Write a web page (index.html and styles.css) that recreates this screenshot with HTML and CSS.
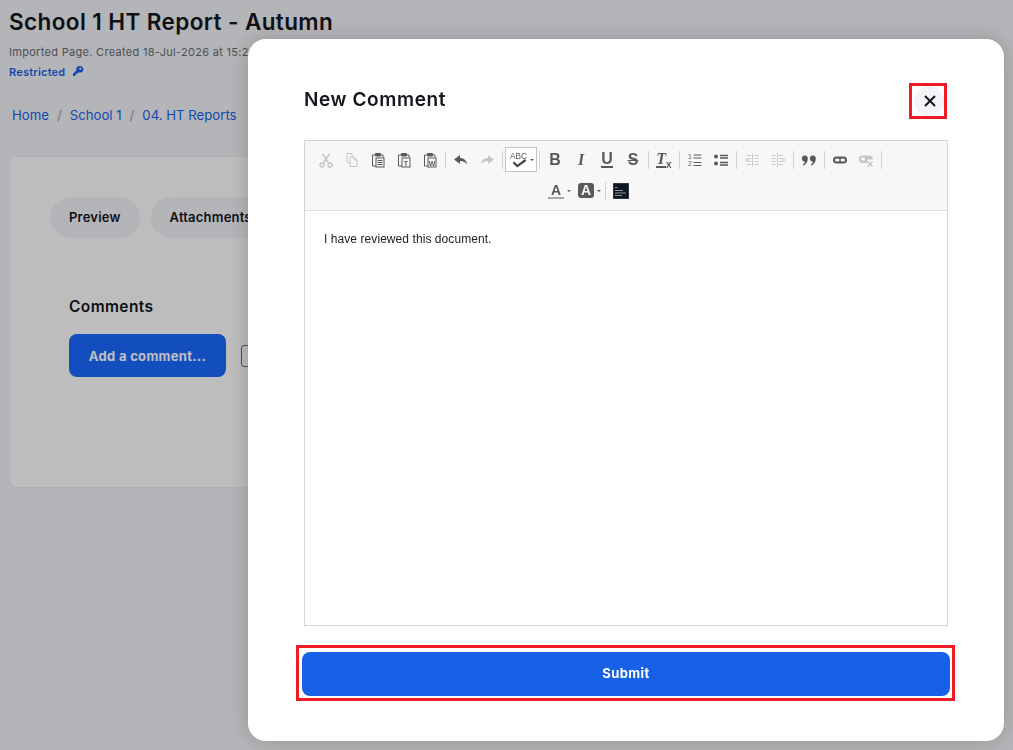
FILE: index.html
```html
<!DOCTYPE html>
<html lang="en">

<head>
    <meta charset="UTF-8">
    <meta name="viewport" content="width=device-width, initial-scale=1.0">
    <link rel="stylesheet" href="styles.css">
    <title>School 1 HT Report - Autumn</title>
</head>

<body>
    <header class="page-head">
        <h1>School 1 HT Report - Autumn</h1>
        <p class="meta">Imported Page. Created 18-Jul-2026 at 15:24 by Admin</p>
        <p class="restricted">Restricted
            <svg class="key" viewBox="0 0 12 12"><path d="M7.6 1a3.3 3.3 0 0 0-3.2 4.3L1 8.7V11h2.2V9.6h1.4V8.2H6l.8-.9A3.3 3.3 0 1 0 7.6 1zm.7 1.6a1 1 0 1 1 0 2.1 1 1 0 0 1 0-2.1z"/></svg>
        </p>
    </header>

    <nav class="crumbs">
        <a>Home</a><span class="slash">/</span>
        <a>School 1</a><span class="slash">/</span>
        <a>04. HT Reports</a>
    </nav>

    <section class="card">
        <div class="tabs">
            <span class="tab">Preview</span>
            <span class="tab">Attachments</span>
        </div>
        <h2>Comments</h2>
        <div class="comment-actions">
            <button class="add-comment">Add a comment...</button>
            <span class="small-box"></span>
        </div>
    </section>

    <div class="overlay">
        <div class="modal">
            <div class="modal-head">
                <h3>New Comment</h3>
                <div class="close-frame">
                    <button class="close">
                        <svg viewBox="0 0 12 12"><path d="M1 1l10 10M11 1L1 11"/></svg>
                    </button>
                </div>
            </div>

            <div class="editor">
                <div class="toolbar">
                    <div class="tb-row">
                        <!-- clipboard -->
                        <span class="tb-btn off"><svg viewBox="0 0 16 16"><g class="thick"><circle cx="4" cy="13" r="2"/><circle cx="12" cy="13" r="2"/><path d="M5 11.500L11.500 2M11 11.500L4.500 2"/></g></svg></span>
                        <span class="tb-btn off"><svg viewBox="0 0 16 16"><path d="M3 1.500h5v3M3 1.500v9h2.500M6 5h4l3 3v6.500H6zM10 5v3h3"/></svg></span>
                        <span class="tb-btn"><svg viewBox="0 0 16 16"><path d="M5 3H2.500v11H6M11 3h2v2.500"/><rect class="solid" x="5" y="1" width="6" height="3.500" rx="1"/><rect x="6" y="6" width="8" height="9"/><path d="M7.500 8.500h5M7.500 10.500h5M7.500 12.500h5"/></svg></span>
                        <span class="tb-btn"><svg viewBox="0 0 16 16"><path d="M5 3H2.500v11H6M11 3h2v2.500"/><rect class="solid" x="5" y="1" width="6" height="3.500" rx="1"/><rect x="6" y="6" width="8" height="9"/><text x="10" y="13.500" class="tiny">T</text></svg></span>
                        <span class="tb-btn"><svg viewBox="0 0 16 16"><path d="M5 3H2.500v11H6M11 3h2v2.500"/><rect class="solid" x="5" y="1" width="6" height="3.500" rx="1"/><rect x="6" y="6" width="8" height="9"/><text x="10" y="13.500" class="tiny">W</text></svg></span>
                        <span class="tb-sep"></span>
                        <!-- undo redo -->
                        <span class="tb-btn"><svg viewBox="0 0 16 16"><path class="solid" d="M7 3L1 7.500 7 12V9c3 0 5 .8 7 3.500C13.500 8.500 11 6 7 6z"/></svg></span>
                        <span class="tb-btn off"><svg viewBox="0 0 16 16"><path class="solid" d="M9 3l6 4.500L9 12V9c-3 0-5 .8-7 3.500C2.500 8.500 5 6 9 6z"/></svg></span>
                        <span class="tb-sep"></span>
                        <span class="tb-spell">
                            <svg viewBox="0 0 18 16"><text x="8.500" y="7" class="abc">ABC</text><path class="check" d="M4 10l3.500 3.500L15 8"/></svg>
                            <i class="caret"></i>
                        </span>
                        <span class="tb-sep"></span>
                        <!-- text style -->
                        <span class="tb-btn letter"><b>B</b></span>
                        <span class="tb-btn letter"><b class="ital">I</b></span>
                        <span class="tb-btn letter"><b class="under">U</b></span>
                        <span class="tb-btn letter"><b class="strike">S</b></span>
                        <span class="tb-sep"></span>
                        <span class="tb-btn letter"><b class="ital clear">T</b><i class="clear-x">x</i></span>
                        <span class="tb-sep"></span>
                        <!-- lists -->
                        <span class="tb-btn"><svg viewBox="0 0 16 16"><text x="3" y="6.500" class="num">1</text><text x="3" y="14" class="num">2</text><path d="M6.500 3h8M6.500 6h8M6.500 10.500h8M6.500 13.500h8"/></svg></span>
                        <span class="tb-btn"><svg viewBox="0 0 16 16"><circle class="solid" cx="3" cy="4.500" r="2"/><circle class="solid" cx="3" cy="11.500" r="2"/><path class="thick" d="M7 3.500h8M7 6h8M7 10.500h8M7 13h8"/></svg></span>
                        <span class="tb-sep"></span>
                        <span class="tb-btn off"><svg viewBox="0 0 16 16"><path d="M8.500 1.500v13M10.500 3.500h4M10.500 6.500h4M10.500 9.500h4M10.500 12.500h4M3 3.500h4M3 12.500h4M5 6.500h2M5 9.500h2M1 8L4 6v4z"/></svg></span>
                        <span class="tb-btn off"><svg viewBox="0 0 16 16"><path d="M7.500 1.500v13M1.500 3.500h4M1.500 6.500h4M1.500 9.500h4M1.500 12.500h4M9 3.500h4M9 12.500h4M9 6.500h2M9 9.500h2M15 8l-3-2v4z"/></svg></span>
                        <span class="tb-sep"></span>
                        <span class="tb-btn"><svg viewBox="0 0 16 16"><path class="solid" d="M4 3.500a3 3 0 0 1 2.800 3.200C6.800 10 5 12.500 2.300 13.500L1.700 12.500C3 11.700 3.800 10.800 4 9.700A3 3 0 0 1 4 3.500zM12 3.500a3 3 0 0 1 2.800 3.200c0 3.300-1.800 5.800-4.500 6.800l-.6-1c1.300-.8 2.100-1.700 2.300-2.800A3 3 0 0 1 12 3.500z"/></svg></span>
                        <span class="tb-sep"></span>
                        <span class="tb-btn"><svg viewBox="0 0 16 16"><rect class="solid" x="1" y="4.500" width="14" height="7" rx="3.500"/><rect class="hole" x="3" y="6.500" width="4.500" height="3" rx="1.500"/><rect class="hole" x="8.500" y="6.500" width="4.500" height="3" rx="1.500"/></svg></span>
                        <span class="tb-btn off"><svg viewBox="0 0 16 16"><path class="solid" d="M4.500 3.500h7A3.500 3.500 0 0 1 15 7v.5H9V11H4.500a3.500 3.500 0 0 1 0-7.500z"/><rect class="hole" x="3" y="5.500" width="4" height="3" rx="1.500"/><path class="thick" d="M9.500 9.500l5 5M14.500 9.500l-5 5"/></svg></span>
                        <span class="tb-sep"></span>
                    </div>
                    <div class="tb-row second">
                        <span class="tb-drop">
                            <span class="color-a">A</span>
                            <i class="caret"></i>
                        </span>
                        <span class="tb-drop">
                            <span class="back-a">A</span>
                            <i class="caret"></i>
                        </span>
                        <span class="tb-sep"></span>
                        <span class="tb-btn">
                            <svg class="logo" viewBox="0 0 16 16"><rect width="16" height="16" fill="#0f1720"/><path d="M2 4.500h2.500M2 7.500h8M2 10h11M2 12.500h7" stroke="#8d949c" stroke-width="1" fill="none"/></svg>
                        </span>
                    </div>
                </div>
                <div class="editor-body">
                    <p>I have reviewed this document.</p>
                </div>
            </div>

            <div class="submit-frame">
                <button class="submit">Submit</button>
            </div>
        </div>
    </div>
</body>

</html>
```
FILE: styles.css
```css
body {
    font-family: 'Inter', 'Liberation Sans', sans-serif;
    background-color: #f1f2f6;
    margin: 0;
    padding: 0;
    height: 750px;
    overflow: hidden;
    color: #14161c;
}

.page-head {
    padding: 7px 9px 0;
}

.page-head h1 {
    margin: 0;
    font-size: 22.500px;
    line-height: 29px;
    font-weight: 600;
    letter-spacing: 0.4px;
}

.meta {
    margin: 8px 0 0;
    font-size: 11px;
    line-height: 16px;
    letter-spacing: 0.3px;
    color: #666a70;
    white-space: nowrap;
}

.restricted {
    margin: 4px 0 0;
    font-size: 11px;
    line-height: 16px;
    font-weight: 600;
    letter-spacing: 0.2px;
    color: #1a5fe8;
}

.key {
    width: 12px;
    height: 12px;
    margin-left: 4px;
    vertical-align: -1px;
    fill: #1a5fe8;
}

.crumbs {
    display: flex;
    padding: 0 12px;
    margin-top: 25px;
    font-size: 13.200px;
    line-height: 20px;
    color: #1a5fe8;
}

.slash {
    margin: 0 8px 0 8px;
    color: #9a9ba0;
}

.card {
    margin: 31px 9px 0;
    height: 332px;
    box-sizing: border-box;
    padding: 40px 40px 0;
    background-color: #fdfdfd;
    border: 1px solid #eceef2;
    border-radius: 8px;
}

.tabs {
    display: flex;
    gap: 11px;
}

.tab {
    padding: 0 19px;
    height: 41px;
    line-height: 41px;
    border-radius: 21px;
    background-color: #f1f2f6;
    font-size: 13px;
    font-weight: 600;
    letter-spacing: 0.2px;
}

.card h2 {
    margin: 59px 0 0 19px;
    font-size: 15.500px;
    line-height: 20px;
    font-weight: 600;
    letter-spacing: 0.4px;
}

.comment-actions {
    display: flex;
    align-items: center;
    gap: 15px;
    margin: 17px 0 0 19px;
}

.add-comment {
    width: 157px;
    height: 43px;
    border: none;
    border-radius: 8px;
    background-color: #1a69ff;
    color: #fff;
    font-family: inherit;
    font-size: 13px;
    font-weight: 700;
    letter-spacing: 0.3px;
}

.small-box {
    width: 40px;
    height: 20px;
    border: 1px solid #666a70;
    border-radius: 3px;
}

.overlay {
    position: fixed;
    top: 0;
    left: 0;
    right: 0;
    bottom: 0;
    background-color: rgba(0, 0, 0, 0.25);
}

.modal {
    box-sizing: border-box;
    width: 756px;
    height: 702px;
    margin: 39px 0 0 248px;
    padding: 44px 56px 0;
    background-color: #fff;
    border-radius: 18px;
    box-shadow: 0 0 22px rgba(0, 0, 0, 0.2);
}

.modal-head {
    display: flex;
    align-items: center;
    justify-content: space-between;
    padding-right: 1px;
    margin-bottom: 21px;
}

.modal-head h3 {
    margin: 0 0 4px;
    font-size: 19px;
    font-weight: 600;
    letter-spacing: 0.6px;
    color: #14161c;
}

.close-frame {
    box-sizing: border-box;
    width: 38px;
    height: 36px;
    padding-left: 2px;
    border: 3px solid #ed1c24;
}

.close {
    display: flex;
    align-items: center;
    justify-content: center;
    width: 30px;
    height: 30px;
    padding: 0 0 0 2px;
    border: none;
    border-radius: 50%;
    background-color: #f3f4f8;
}

.close svg {
    width: 12px;
    height: 12px;
    fill: none;
    stroke: #14161c;
    stroke-width: 2;
}

.editor {
    box-sizing: border-box;
    height: 486px;
    border: 1px solid #d6d6d6;
}

.toolbar {
    box-sizing: border-box;
    height: 70px;
    padding: 6px 8px 0;
    background-color: #f7f7f7;
    border-bottom: 1px solid #dcdcdc;
}

.tb-row {
    display: flex;
    align-items: center;
    height: 25px;
}

.tb-row.second {
    margin-top: 6px;
    padding-left: 230px;
}

.tb-btn {
    display: flex;
    align-items: center;
    justify-content: center;
    width: 26px;
    height: 25px;
    color: #595959;
}

.tb-btn svg {
    width: 16px;
    height: 16px;
    fill: none;
    stroke: #595959;
    stroke-width: 1;
}

.tb-btn.off svg {
    stroke: #c6c6c6;
}

.tb-btn svg .solid {
    fill: #595959;
    stroke: none;
}

.tb-btn.off svg .solid {
    fill: #c6c6c6;
}

.tb-btn svg .hole {
    fill: #f7f7f7;
    stroke: none;
}

.tb-btn svg .thick {
    stroke-width: 1.500;
}

.tb-btn svg text {
    font-family: 'Liberation Sans', sans-serif;
    text-anchor: middle;
    fill: #595959;
    stroke: none;
}

.tb-btn svg .tiny {
    font-size: 7px;
    font-weight: 700;
}

.tb-btn svg .num {
    font-size: 7px;
}

.tb-sep {
    width: 1px;
    height: 18px;
    margin: 0 2px;
    background-color: #d2d2d2;
}

.tb-spell {
    box-sizing: border-box;
    display: flex;
    align-items: center;
    justify-content: center;
    gap: 1px;
    width: 32px;
    height: 25px;
    background-color: #fff;
    border: 1px solid #c4c4c4;
}

.tb-spell svg {
    width: 20px;
    height: 18px;
}

.abc {
    font-family: 'Liberation Sans', sans-serif;
    font-size: 7.500px;
    text-anchor: middle;
    fill: #595959;
}

.check {
    fill: none;
    stroke: #444;
    stroke-width: 2;
}

.caret {
    display: inline-block;
    width: 0;
    height: 0;
    border-top: 2px solid #595959;
    border-left: 2px solid transparent;
    border-right: 2px solid transparent;
}

.letter b {
    font-family: 'Liberation Sans', sans-serif;
    font-size: 16px;
    font-weight: 700;
}

.letter .ital {
    font-family: 'Liberation Serif', serif;
    font-style: italic;
}

.letter .under {
    border-bottom: 2px solid #595959;
    line-height: 15px;
}

.letter .strike {
    text-decoration: line-through;
}

.letter .clear {
    border-bottom: 2px solid #595959;
    line-height: 14px;
}

.clear-x {
    font-family: 'Liberation Sans', sans-serif;
    font-size: 10px;
    font-style: normal;
    font-weight: 700;
    margin-top: 9px;
}

.tb-drop {
    display: flex;
    align-items: center;
    gap: 3px;
    width: 30px;
    height: 25px;
    padding-left: 5px;
    box-sizing: border-box;
}

.color-a {
    width: 16px;
    text-align: center;
    font-family: 'Liberation Sans', sans-serif;
    font-size: 14px;
    font-weight: 700;
    line-height: 14px;
    color: #595959;
    border-bottom: 2px solid #a8a8a8;
}

.back-a {
    width: 16px;
    height: 15px;
    text-align: center;
    font-family: 'Liberation Sans', sans-serif;
    font-size: 14px;
    font-weight: 700;
    line-height: 15px;
    color: #f7f7f7;
    background-color: #595959;
    border-radius: 3px;
}

.editor-body {
    padding: 20px 19px;
    font-family: 'Liberation Sans', Arial, sans-serif;
    font-size: 12px;
    line-height: 16px;
    letter-spacing: 0.07px;
    color: #222;
}

.editor-body p {
    margin: 0;
}

.submit-frame {
    box-sizing: border-box;
    width: 659px;
    height: 56px;
    margin: 19px 0 0 -8px;
    padding: 4px 2px 0 3px;
    border: 3px solid #ed1c24;
}

.submit {
    display: block;
    width: 100%;
    height: 44px;
    padding-bottom: 3px;
    border: none;
    border-radius: 8px;
    background-color: #1860e6;
    color: #fff;
    font-family: inherit;
    font-size: 13px;
    font-weight: 700;
    letter-spacing: 0.4px;
}
```
